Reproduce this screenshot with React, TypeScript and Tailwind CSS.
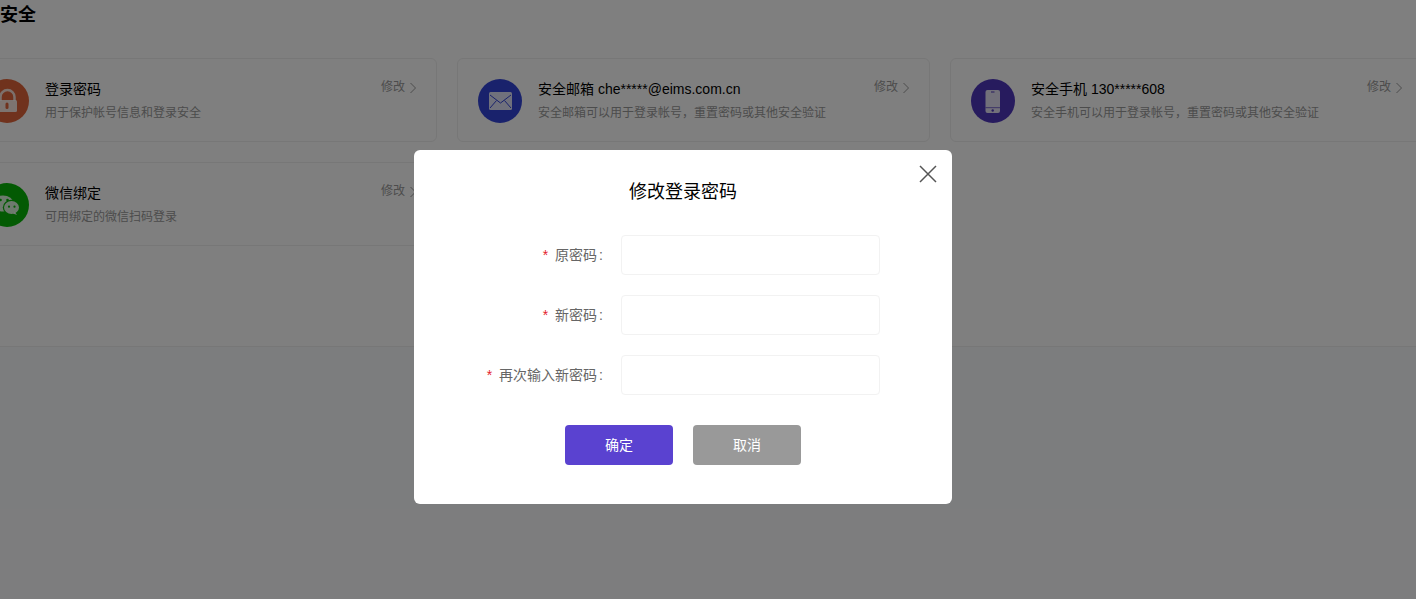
const ITEMS = [
  { title: '登录密码', desc: '用于保护帐号信息和登录安全', icon: 'lock' },
  { title: '安全邮箱 che*****@eims.com.cn', desc: '安全邮箱可以用于登录帐号，重置密码或其他安全验证', icon: 'mail' },
  { title: '安全手机 130*****608', desc: '安全手机可以用于登录帐号，重置密码或其他安全验证', icon: 'phone' },
  { title: '微信绑定', desc: '可用绑定的微信扫码登录', icon: 'wechat' },
];

const FIELDS = ['原密码', '新密码', '再次输入新密码'];

function CardIcon({ name }: { name: string }) {
  if (name === 'lock') {
    return (
      <svg viewBox="0 0 44 44" className="h-11 w-11 shrink-0">
        <circle cx="22" cy="22" r="22" fill="#e0653a" />
        <path d="M15.500 22v-4a7 7 0 0 1 14 0v4" fill="none" stroke="#ffffff" strokeWidth="2.500" opacity="0.8" />
        <rect x="12" y="21" width="20" height="12" rx="1.500" fill="#ffffff" opacity="0.85" />
        <rect x="20.500" y="23.500" width="3" height="6.500" rx="1.500" fill="#e0653a" />
      </svg>
    );
  }
  if (name === 'mail') {
    return (
      <svg viewBox="0 0 44 44" className="h-11 w-11 shrink-0">
        <circle cx="22" cy="22" r="22" fill="#3344d8" />
        <rect x="11" y="13" width="23" height="18" rx="1.500" fill="#ffffff" opacity="0.85" />
        <path d="M12 16l10.500 8L33 16M12 29l6.500-7.500M33 29l-6.500-7.500" fill="none" stroke="#3344d8" strokeWidth="1" />
      </svg>
    );
  }
  if (name === 'phone') {
    return (
      <svg viewBox="0 0 44 44" className="h-11 w-11 shrink-0">
        <circle cx="22" cy="22" r="22" fill="#4f36bd" />
        <rect x="14.500" y="11" width="14.500" height="23" rx="2" fill="#ffffff" opacity="0.85" />
        <rect x="20" y="12.500" width="3.500" height="1" fill="#4f36bd" />
        <rect x="14.500" y="28" width="14.500" height="1.200" fill="#4f36bd" opacity="0.6" />
        <circle cx="21.700" cy="31.500" r="1.200" fill="#4f36bd" />
      </svg>
    );
  }
  return (
    <svg viewBox="0 0 44 44" className="h-11 w-11 shrink-0">
      <circle cx="22" cy="22" r="22" fill="#07b507" />
      <ellipse cx="18" cy="20.500" rx="10.500" ry="8" fill="#ffffff" opacity="0.85" />
      <path d="M12 26l-1 4 4.500-2.500z" fill="#ffffff" opacity="0.85" />
      <circle cx="15.500" cy="17" r="1.300" fill="#07b507" />
      <circle cx="22.500" cy="17" r="1.300" fill="#07b507" />
      <ellipse cx="26.500" cy="24.500" rx="8.700" ry="7.700" fill="#07b507" />
      <ellipse cx="26.500" cy="24.500" rx="7.500" ry="6.500" fill="#ffffff" opacity="0.85" />
      <path d="M30 29l2 3-4-1.500z" fill="#ffffff" opacity="0.85" />
      <circle cx="24" cy="23.700" r="1.100" fill="#07b507" />
      <circle cx="29.500" cy="23.700" r="1.100" fill="#07b507" />
    </svg>
  );
}

export default function App() {
  return (
    <div className="relative h-[599px] w-[1416px] overflow-hidden bg-[#f9fafc] font-['Liberation_Sans','Noto_Sans_CJK_SC',sans-serif]">
      <div className="h-[347px] border-b border-[#eeeeee] bg-white">
        <h1 className="h-[58px] pt-[2px] text-[18px] leading-[26px] font-bold text-black">安全</h1>
        <div className="-ml-[36px] grid w-[1459px] grid-cols-[repeat(3,473px)] gap-5">
          {ITEMS.map((item) => (
            <div key={item.icon} className="flex h-[84px] items-start rounded-md border border-[#eeeeee] pt-5 pr-[19px] pl-5">
              <CardIcon name={item.icon} />
              <div className="ml-4 flex-1">
                <div className="text-sm leading-5 text-black">{item.title}</div>
                <div className="mt-1 text-xs leading-5 text-[#999999]">{item.desc}</div>
              </div>
              <div className="flex items-center gap-1 text-xs leading-4 text-[#999999]">
                <span>修改</span>
                <svg viewBox="0 0 8 12" className="mt-[1px] h-3 w-2 fill-none stroke-[#999999]">
                  <path d="M1.500 1l5 5-5 5" />
                </svg>
              </div>
            </div>
          ))}
        </div>
      </div>

      {/* Modal */}
      <div className="absolute inset-0 bg-black/50 pt-[149.5px] pl-[414px]">
        <div className="relative h-[354.5px] w-[538px] rounded-md bg-white pt-[29.5px]">
          <button className="absolute top-[15.5px] right-[15px] h-[18px] w-[18px]">
            <svg viewBox="0 0 18 18" className="h-[18px] w-[18px] fill-none stroke-[#555555] stroke-[1.500]">
              <path d="M1 1l16 16M17 1L1 17" />
            </svg>
          </button>
          <h2 className="text-center text-[18px] leading-[26px] font-normal text-black">修改登录密码</h2>
          <div className="mt-[30px] flex flex-col gap-5">
            {FIELDS.map((label) => (
              <div key={label} className="flex h-10 items-start">
                <div className="w-[189px] pt-[10px] text-right text-sm leading-5 text-[#666666]">
                  <span className="mr-[7px] text-[#e5202e]">*</span>
                  {label}
                  <span className="ml-[2px]">:</span>
                </div>
                <input className="ml-[18px] h-[39.5px] w-[259px] rounded-[4px] border border-[#f2f2f2] bg-white outline-none" />
              </div>
            ))}
          </div>
          <div className="mt-[29.5px] flex justify-center gap-5">
            <button className="h-10 w-[108px] rounded-[4px] bg-[#5a42d0] text-sm text-white">确定</button>
            <button className="h-10 w-[108px] rounded-[4px] bg-[#999999] text-sm text-white">取消</button>
          </div>
        </div>
      </div>
    </div>
  );
}
